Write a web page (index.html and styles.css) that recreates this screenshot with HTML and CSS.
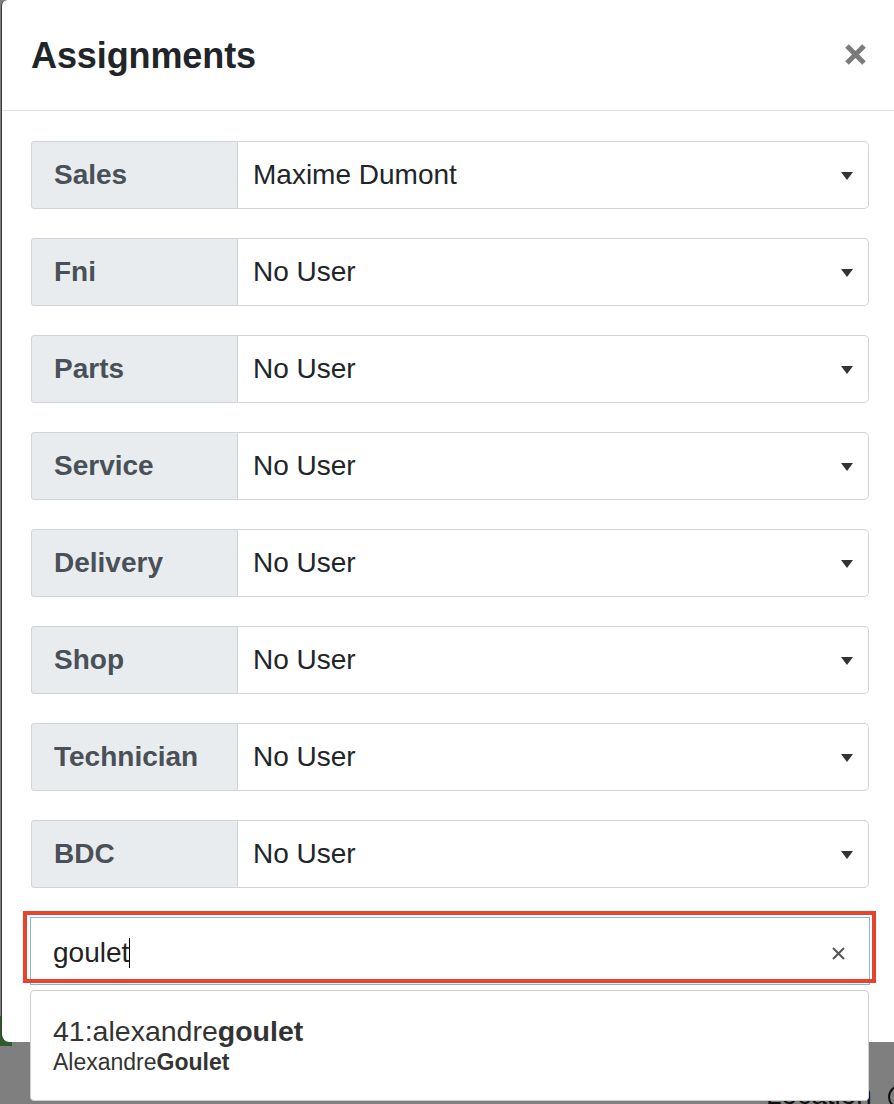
FILE: index.html
```html
<!DOCTYPE html>
<html lang="en">
<head>
  <meta charset="UTF-8">
  <title>Assignments</title>
  <link rel="stylesheet" href="styles.css">
</head>
<body>
  <!-- page behind the modal -->
  <div class="backdrop-bits">
    <div class="green-corner"></div>
    <div class="location">Location <span class="info-ico">i</span></div>
  </div>

  <div class="modal">
    <div class="modal-header">
      <h2 class="modal-title">Assignments</h2>
      <button class="close" type="button" aria-label="Close">
        <svg width="21" height="21" viewBox="0 0 21 21"><path d="M2 2 L19 19 M19 2 L2 19" stroke="#7b7b7b" stroke-width="5"/></svg>
      </button>
    </div>
    <div class="modal-body">
      <div class="input-group">
        <div class="group-label">Sales</div>
        <div class="group-select">Maxime Dumont<span class="caret"></span></div>
      </div>
      <div class="input-group">
        <div class="group-label">Fni</div>
        <div class="group-select">No User<span class="caret"></span></div>
      </div>
      <div class="input-group">
        <div class="group-label">Parts</div>
        <div class="group-select">No User<span class="caret"></span></div>
      </div>
      <div class="input-group">
        <div class="group-label">Service</div>
        <div class="group-select">No User<span class="caret"></span></div>
      </div>
      <div class="input-group">
        <div class="group-label">Delivery</div>
        <div class="group-select">No User<span class="caret"></span></div>
      </div>
      <div class="input-group">
        <div class="group-label">Shop</div>
        <div class="group-select">No User<span class="caret"></span></div>
      </div>
      <div class="input-group">
        <div class="group-label">Technician</div>
        <div class="group-select">No User<span class="caret"></span></div>
      </div>
      <div class="input-group">
        <div class="group-label">BDC</div>
        <div class="group-select">No User<span class="caret"></span></div>
      </div>

      <div class="search-wrap">
        <div class="search-input">
          <span class="typed">goulet</span><span class="cursor"></span>
          <svg class="clear" width="13" height="13" viewBox="0 0 13 13"><path d="M1 1 L12 12 M12 1 L1 12" stroke="#555" stroke-width="2"/></svg>
        </div>
        <div class="highlight-box"></div>
        <div class="results">
          <div class="result-main">41:alexandre<b>goulet</b></div>
          <div class="result-sub">Alexandre<b>Goulet</b></div>
        </div>
      </div>
    </div>
  </div>
</body>
</html>
```

FILE: styles.css
```css
html, body {
  margin: 0;
  padding: 0;
}
body {
  width: 894px;
  height: 1104px;
  overflow: hidden;
  position: relative;
  background: #7f7f7f;
  font-family: "Liberation Sans", Arial, sans-serif;
}
.backdrop-bits .green-corner {
  position: absolute;
  left: 0;
  top: 1016px;
  width: 12px;
  height: 30px;
  background: #2e5b29;
}
.location {
  position: absolute;
  left: 766px;
  top: 1079px;
  font-size: 28px;
  color: #111;
  white-space: nowrap;
}
.info-ico {
  display: inline-block;
  width: 20px;
  height: 20px;
  border: 2px solid #111;
  border-radius: 50%;
  font-size: 15px;
  line-height: 20px;
  text-align: center;
  vertical-align: 2px;
  margin-left: 8px;
}
.modal {
  position: absolute;
  left: 1px;
  top: 0;
  width: 900px;
  height: 1042px;
  background: #fff;
  border-left: 1px solid #3a3a3a;
  border-radius: 6px 0 0 8px;
  box-sizing: border-box;
}
.modal-header {
  height: 110px;
  border-bottom: 1px solid #e3e3e3;
  display: flex;
  align-items: center;
  justify-content: space-between;
  padding: 0 29px 0 29px;
  box-sizing: content-box;
}
.modal-title {
  margin: 0;
  font-size: 36px;
  font-weight: 700;
  color: #212529;
  letter-spacing: -0.1px;
  margin-top: 2px;
}
.close {
  border: none;
  background: none;
  padding: 0;
  margin-right: 6px;
  margin-top: -2px;
  display: flex;
}
.modal-body {
  padding: 30px 29px 0 29px;
  display: flex;
  flex-direction: column;
  gap: 29px;
}
.input-group {
  display: flex;
  width: 838px;
  height: 68px;
  font-size: 28px;
}
.group-label {
  width: 207px;
  box-sizing: border-box;
  background: #e9ecef;
  border: 1px solid #ced4da;
  border-radius: 3px 0 0 3px;
  color: #495057;
  font-weight: 700;
  display: flex;
  align-items: center;
  padding-left: 22px;
}
.group-select {
  flex: 1;
  border: 1px solid #ced4da;
  border-left: none;
  border-radius: 0 5px 5px 0;
  color: #212529;
  display: flex;
  align-items: center;
  padding-left: 15px;
  position: relative;
}
.caret {
  margin-left: auto;
  margin-right: 15px;
  width: 0;
  height: 0;
  border-left: 6.5px solid transparent;
  border-right: 6.5px solid transparent;
  border-top: 8px solid #333;
  margin-top: 2px;
}
.search-wrap {
  position: relative;
  margin-left: -1px;
  width: 840px;
}
.search-input {
  height: 68px;
  box-sizing: border-box;
  border: 1px solid #7fb5ec;
  display: flex;
  align-items: center;
  padding-left: 22px;
  padding-top: 3px;
  font-size: 28px;
  color: #222;
}
.cursor {
  width: 1px;
  height: 30px;
  background: #000;
  margin-left: 0;
}
.clear {
  margin-left: auto;
  margin-right: 24px;
  margin-top: 2px;
}
.highlight-box {
  position: absolute;
  left: -7px;
  right: -6px;
  top: -6px;
  height: 72px;
  box-sizing: border-box;
  border: 4px solid #e8442b;
}
.results {
  position: absolute;
  left: 0;
  top: 73px;
  width: 839px;
  height: 111px;
  box-sizing: border-box;
  background: #fff;
  border: 1px solid #cfcfcf;
  border-radius: 4px;
  padding: 24px 0 0 22px;
  color: #333;
  z-index: 2;
}
.result-main {
  font-size: 28.5px;
  line-height: 32px;
}
.result-sub {
  font-size: 23px;
  line-height: 30px;
}
```
